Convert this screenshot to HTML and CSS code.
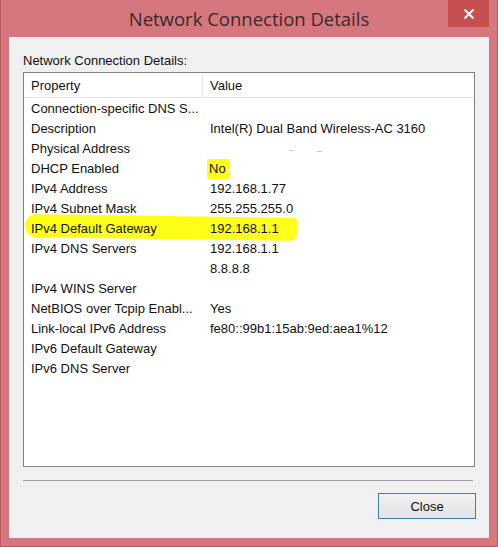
FILE: index.html
```html
<!DOCTYPE html>
<html lang="en">
<head>
  <meta charset="UTF-8" />
  <title>Network Connection Details</title>
  <meta name="viewport" content="width=device-width, initial-scale=1" />
  <link rel="stylesheet" href="styles.css">
</head>
<body>
  <div class="window">
    <div class="titlebar">
      <span class="title">Network Connection Details</span>
      <button class="close-x" aria-label="Close">
        <svg width="12" height="10" viewBox="0 0 12 10">
          <path d="M1.5 0.5 L10.5 9.5 M10.5 0.5 L1.5 9.5" stroke="#fff" stroke-width="2" fill="none" />
        </svg>
      </button>
    </div>

    <div class="client">
      <div class="label">Network Connection Details:</div>

      <div class="listview">
        <div class="lv-head">
          <div class="col-prop">Property</div>
          <div class="col-val">Value</div>
        </div>
        <div class="lv-body">
          <div class="row"><div class="col-prop">Connection-specific DNS S...</div><div class="col-val"></div></div>
          <div class="row"><div class="col-prop">Description</div><div class="col-val">Intel(R) Dual Band Wireless-AC 3160</div></div>
          <div class="row"><div class="col-prop">Physical Address</div><div class="col-val"><span class="smudge a"></span><span class="smudge b"></span></div></div>
          <div class="row"><div class="col-prop">DHCP Enabled</div><div class="col-val"><span class="mark-small">No</span></div></div>
          <div class="row"><div class="col-prop">IPv4 Address</div><div class="col-val">192.168.1.77</div></div>
          <div class="row"><div class="col-prop">IPv4 Subnet Mask</div><div class="col-val">255.255.255.0</div></div>
          <div class="row marked"><span class="marker"></span><div class="col-prop">IPv4 Default Gateway</div><div class="col-val">192.168.1.1</div></div>
          <div class="row"><div class="col-prop">IPv4 DNS Servers</div><div class="col-val">192.168.1.1</div></div>
          <div class="row"><div class="col-prop"></div><div class="col-val">8.8.8.8</div></div>
          <div class="row"><div class="col-prop">IPv4 WINS Server</div><div class="col-val"></div></div>
          <div class="row"><div class="col-prop">NetBIOS over Tcpip Enabl...</div><div class="col-val">Yes</div></div>
          <div class="row"><div class="col-prop">Link-local IPv6 Address</div><div class="col-val">fe80::99b1:15ab:9ed:aea1%12</div></div>
          <div class="row"><div class="col-prop">IPv6 Default Gateway</div><div class="col-val"></div></div>
          <div class="row"><div class="col-prop">IPv6 DNS Server</div><div class="col-val"></div></div>
        </div>
      </div>

      <div class="divider"></div>

      <div class="buttons">
        <button class="btn">Close</button>
      </div>
    </div>
  </div>
</body>
</html>
```

FILE: styles.css
```css
/* RESET */
* { margin: 0; padding: 0; box-sizing: border-box; }
html, body { width: 498px; height: 547px; }
body {
  font-family: "Liberation Sans", Arial, sans-serif;
  font-size: 13px;
  color: #111;
  background: #d5777e;
  overflow: hidden;
}

/* WINDOW FRAME */
.window {
  width: 498px;
  height: 547px;
  display: flex;
  flex-direction: column;
  background: #d6767e;
  border: 1px solid #b85a62;
  border-top: none;
}

.titlebar {
  height: 37px;
  flex-shrink: 0;
  position: relative;
  display: flex;
  align-items: center;
  justify-content: center;
}
.title {
  font-family: "Open Sans", "Noto Sans", sans-serif;
  font-size: 18.5px;
  color: #3b2a2c;
  margin-top: -1px;
}
.close-x {
  position: absolute;
  top: 0;
  right: 8px;
  width: 41px;
  height: 27px;
  border: none;
  background: #c84f50;
  display: flex;
  align-items: center;
  justify-content: center;
}

/* CLIENT AREA */
.client {
  flex: 1;
  margin: 0 8px 8px 8px;
  background: #f0f0f0;
  padding: 16px 13px 0 14px;
  display: flex;
  flex-direction: column;
}
.label {
  height: 19px;
  line-height: 16px;
}

.listview {
  height: 395px;
  background: #fff;
  border: 1px solid #838383;
  margin-right: 1px;
}
.lv-head {
  display: flex;
  height: 25px;
  border-bottom: 1px solid #e5e5e5;
}
.lv-head .col-prop,
.lv-head .col-val {
  height: 24px;
  line-height: 26px;
}
.lv-head .col-prop { border-right: 1px solid #e5e5e5; }
.lv-body { padding-top: 1px; }
.row {
  display: flex;
  height: 20px;
  line-height: 20px;
  position: relative;
}
.col-prop {
  width: 179px;
  padding-left: 7px;
  white-space: nowrap;
  position: relative;
}
.col-val {
  padding-left: 7px;
  white-space: nowrap;
  position: relative;
}

/* marker pen strokes */
.mark-small {
  background: #ffff1a;
  padding: 2px 4px 3px 2px;
  margin-left: -3px;
  border-radius: 2px;
}
.marker {
  position: absolute;
  left: 1px;
  top: -3px;
  width: 272px;
  height: 23px;
  background: #ffff1a;
  border-radius: 10px 3px 6px 11px / 12px 4px 6px 11px;
  transform: rotate(0.8deg);
}

/* redacted address leftovers */
.smudge {
  position: absolute;
  top: 11px;
  height: 1px;
  background: #c8c8c8;
}
.smudge.a { left: 86px; width: 4px; }
.smudge.b { left: 114px; width: 5px; top: 12px; }

.divider {
  height: 1px;
  background: #a0a0a0;
  margin: 13px 3px 0 0;
}

.buttons {
  display: flex;
  justify-content: flex-end;
  padding-top: 12px;
}
.btn {
  width: 98px;
  height: 26px;
  font-family: "Liberation Sans", Arial, sans-serif;
  font-size: 13px;
  color: #111;
  border: 1px solid #3c7fb1;
  background: linear-gradient(#f2f2f2, #e3e3e3);
}
```
